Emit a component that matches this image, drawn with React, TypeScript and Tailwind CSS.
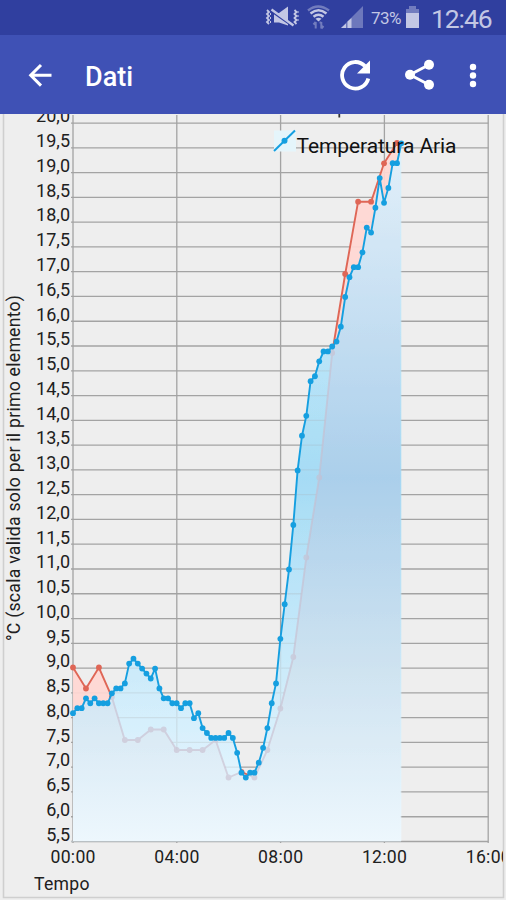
const PLOT = { left: 73, right: 488.5, top: 115, bottom: 841.5 };
const DEGREE = 49.55;
const TEN_MINUTES = 4.32;

const air = [
  8.1, 8.2, 8.2, 8.4, 8.3, 8.4, 8.3, 8.3, 8.3, 8.5, 8.6, 8.6, 8.7, 9.1, 9.2, 9.1, 9.0, 8.9, 8.8, 9.0,
  8.6, 8.4, 8.4, 8.3, 8.3, 8.2, 8.3, 8.3, 8.0, 8.1, 7.8, 7.7, 7.6, 7.6, 7.6, 7.6, 7.7, 7.6, 7.3, 6.9,
  6.8, 6.9, 6.9, 7.1, 7.4, 7.8, 8.3, 8.7, 9.6, 10.3, 11.0, 11.9, 13.0, 13.7, 14.1, 14.8, 14.9, 15.2,
  15.4, 15.4, 15.5, 15.6, 15.9, 16.5, 16.9, 17.1, 17.1, 17.4, 17.9, 17.8, 18.3, 18.9, 18.4, 18.7, 19.2,
  19.2, 19.6,
];

// second series has its own scale, so these are plot heights
const other = [
  667.5, 688.5, 667.5, 697, 740, 740, 729.5, 729.5, 750, 750, 750, 740, 777.5, 772, 777.5, 750, 708.5,
  657, 557.5, 477.5, 353, 274, 201.7, 201.7, 163.3, 143,
];

const yOf = (value: number) => PLOT.bottom - 0.3 - (value - 5.5) * DEGREE;

const airPoints = air.map((v, i) => [PLOT.left + i * TEN_MINUTES, yOf(v) + 0.8]);
const otherPoints = other.map((y, i) => [PLOT.left + i * TEN_MINUTES * 3, y]);

const toLine = (points: number[][]) => points.map(([x, y]) => `${x.toFixed(1)},${y.toFixed(1)}`).join(" ");
const airLine = toLine(airPoints);
const otherLine = `${toLine(otherPoints)} 400.3,143`;
const airArea = `73,841 ${airLine} 401.3,841`;
const otherArea = `73,841 ${otherLine} 400.3,841`;

const rows = Array.from({ length: 30 }, (_, i) => 5.5 + i * 0.5);
const hours = ["00:00", "04:00", "08:00", "12:00", "16:00"];

function Grid() {
  return (
    <g stroke="#a3a3a3" strokeWidth="1.3">
      {rows.map((v) => (
        <line key={v} x1="71" x2={PLOT.right} y1={yOf(v) + 0.3} y2={yOf(v) + 0.3} />
      ))}
      {hours.map((h, i) => (
        <line key={h} x1={73 + i * 103.8} x2={73 + i * 103.8} y1={PLOT.top} y2="843" />
      ))}
    </g>
  );
}

function Series({ line, points, color }: { line: string; points: number[][]; color: string }) {
  return (
    <g>
      <polyline points={line} fill="none" stroke={color} strokeWidth="1.9" />
      {points.map(([x, y], i) => (
        <circle key={i} cx={x} cy={y} r="2.9" fill={color} />
      ))}
    </g>
  );
}

function StatusBar() {
  return (
    <div className="flex h-[35px] shrink-0 items-center bg-[#303f9f] pl-[265px] text-[#c3c7e4]">
      <svg width="34" height="35" viewBox="0 0 34 35" fill="none" stroke="currentColor">
        <path d="M2 10l2 2-2 2 2 2-2 2 2 2-2 2 2 2M29.5 10l2 2-2 2 2 2-2 2 2 2-2 2 2 2" strokeWidth="1.8" />
        <path d="M5.5 13v11M33 11v12" strokeWidth="1" strokeDasharray="2 2" />
        <path d="M9 13h5l9-6.5v19l-9-3H9z" fill="currentColor" stroke="none" />
        <path d="M8 12.5l20 14" stroke="#303f9f" strokeWidth="2" />
        <path d="M6.5 9.5l22 16" strokeWidth="2.3" />
      </svg>
      <svg className="ml-2" width="24" height="35" viewBox="0 0 24 35" fill="none" stroke="currentColor">
        <path d="M1 10.5q10-8 21 0" strokeWidth="2.4" opacity=".45" />
        <path d="M3.5 13.5q8-6.5 16 0M6.5 16.7q5-4 10 0" strokeWidth="2.5" />
        <path d="M8.5 18.7q3-2 6 0l-3 2.7z" fill="currentColor" stroke="none" />
        <path d="M8.7 22v6.5M6.5 24.5L8.7 22M14.3 22v6.5M16.5 26l-2.2 2.5M12.5 22.5h1.8" strokeWidth="2" opacity=".45" />
      </svg>
      <svg className="ml-[10px]" width="23" height="35" viewBox="0 0 23 35" fill="currentColor">
        <path d="M0 28L22 6v22z" opacity=".42" />
        <path d="M0 28l5-4.5V28zM6.5 28v-6.5L10.5 18v10z" />
      </svg>
      <span className="ml-[7px] w-[34px] pt-[2px] text-[17px] leading-none tracking-[-0.5px]">73%</span>
      <svg width="15" height="35" viewBox="0 0 15 35" fill="currentColor">
        <path d="M4 6h7v3h3v4H1V9h3z" opacity=".45" />
        <path d="M1 13h13v15H1z" />
      </svg>
      <span className="ml-[11px] pt-[3px] text-[26.5px] leading-none tracking-[-1.1px]">12:46</span>
    </div>
  );
}

function AppBar() {
  return (
    <div className="flex h-[79px] shrink-0 items-center bg-[#3f51b5] text-white">
      <svg className="ml-[28px]" width="24" height="24" viewBox="0 0 24 24" fill="none" stroke="currentColor" strokeWidth="3">
        <path d="M23.5 12.3H2.8M13 2L2.7 12.3 13 22.6" />
      </svg>
      <h1 className="ml-[33px] pt-[5px] text-[27px] leading-none font-medium">Dati</h1>
      <svg className="ml-auto" width="34" height="34" viewBox="0 0 34 34">
        <path d="M30.3 20.5A13.3 13.3 0 1 1 27 8.1" fill="none" stroke="currentColor" strokeWidth="3.8" />
        <path d="M32 2.5v13H19z" fill="currentColor" />
      </svg>
      <svg className="ml-[32px]" width="32" height="34" viewBox="0 0 32 34" fill="currentColor">
        <path d="M25 6.8L6 16.8l19 10" fill="none" stroke="currentColor" strokeWidth="2.9" />
        <circle cx="25" cy="6.8" r="5" />
        <circle cx="6" cy="16.8" r="5" />
        <circle cx="25" cy="26.8" r="5" />
      </svg>
      <svg className="mr-[27px] ml-[31px]" width="12" height="30" viewBox="0 0 12 30" fill="currentColor">
        <circle cx="6" cy="7" r="3.2" />
        <circle cx="6" cy="15.5" r="3.2" />
        <circle cx="6" cy="24" r="3.2" />
      </svg>
    </div>
  );
}

function Chart() {
  return (
    <svg className="block" width="506" height="786" viewBox="0 114 506 786" fontSize="17.6" fill="#202020">
      <defs>
        <linearGradient id="air" gradientUnits="userSpaceOnUse" x1="0" x2="0" y1="115" y2="841">
          <stop offset="0" stopColor="#e2f5fd" />
          <stop offset=".5" stopColor="#a6dcf6" />
          <stop offset="1" stopColor="#eef9ff" />
        </linearGradient>
        <linearGradient id="both" gradientUnits="userSpaceOnUse" x1="0" x2="0" y1="115" y2="841">
          <stop offset="0" stopColor="#e8f3fb" />
          <stop offset=".5" stopColor="#abcfeb" />
          <stop offset=".75" stopColor="#cde2f0" />
          <stop offset="1" stopColor="#edf7fd" />
        </linearGradient>
        <clipPath id="underAir">
          <polygon points={airArea} />
        </clipPath>
        <clipPath id="frame">
          <rect x="0" y="114" width="503" height="786" />
        </clipPath>
      </defs>

      <rect y="114" width="506" height="786" fill="#eeeeee" />
      <path d="M3.5 114v783.5H503.5V114" fill="none" stroke="#cfcfcf" strokeWidth="1.6" />
      <Grid />

      <polygon points={otherArea} fill="#ffd7d3" fillOpacity=".93" />
      <Series line={otherLine} points={otherPoints} color="#df6656" />

      <polygon points={airArea} fill="url(#air)" />
      <g clipPath="url(#underAir)">
        <g opacity=".22">
          <Grid />
        </g>
        <polygon points={otherArea} fill="url(#both)" />
        <g opacity=".6">
          <Series line={otherLine} points={otherPoints} color="#c8bccd" />
        </g>
      </g>
      <path d="M71 841.5h330" stroke="#b9c0c4" />
      <Series line={airLine} points={airPoints} color="#159fe0" />

      {rows.map((v) => (
        <text key={v} x="70" y={yOf(v) - 0.4} fontSize="18" textAnchor="end">
          {v.toFixed(1).replace(".", ",")}
        </text>
      ))}
      <g clipPath="url(#frame)">
        {hours.map((h, i) => (
          <text key={h} x={73 + i * 103.8} y="863" textAnchor="middle" textLength="45">
            {h}
          </text>
        ))}
      </g>
      <text x="34" y="890" textLength="55.5">Tempo</text>
      <text transform="translate(20 641) rotate(-90)" textLength="346">
        °C (scala valida solo per il primo elemento)
      </text>

      <path d="M339.3 114v3.5" stroke="#333" strokeWidth="1.8" />
      <rect x="274" y="130.5" width="22" height="21" fill="#e5f5fb" />
      <path d="M274 151l21-20.5" stroke="#159fe0" strokeWidth="2" />
      <circle cx="284.5" cy="140.8" r="3" fill="#159fe0" />
      <text x="296.5" y="153.3" fontSize="21" fill="#111" textLength="160">
        Temperatura Aria
      </text>
    </svg>
  );
}

export default function App() {
  return (
    <div className="flex h-[900px] w-[506px] flex-col overflow-hidden bg-[#eeeeee] font-['Roboto',sans-serif]">
      <StatusBar />
      <AppBar />
      <Chart />
    </div>
  );
}
